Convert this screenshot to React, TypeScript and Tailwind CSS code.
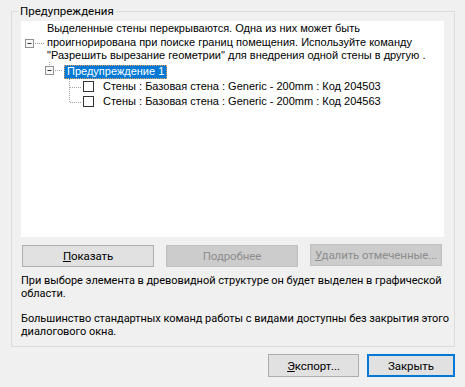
import React from "react";

const ui = { fontFamily: 'Roboto, "Noto Sans", sans-serif' };
const tree = { fontFamily: '"Liberation Sans", Arial, sans-serif' };

function Btn({
  children,
  w,
  disabled,
  focused,
  extra,
}: {
  children: React.ReactNode;
  w: string;
  disabled?: boolean;
  focused?: boolean;
  extra?: string;
}) {
  let cls =
    "flex items-center justify-center whitespace-nowrap text-[11.5px] tracking-[-0.1px] leading-[14px] h-[22px] " +
    w +
    " ";
  if (disabled) cls += "bg-[#cccccc] border border-[#bfbfbf] text-[#8d8d8d] ";
  else if (focused) cls += "bg-[#e1e1e1] border-2 border-[#0078d7] text-black ";
  else cls += "bg-[#e1e1e1] border border-[#adadad] text-black ";
  return <div className={cls + (extra || "")}>{children}</div>;
}

function Check() {
  return <div className="w-[11px] h-[11px] border border-[#333333] bg-white shrink-0" />;
}

export default function App() {
  return (
    <div
      className="w-[465px] h-[387px] bg-[#f0f0f0] overflow-hidden pt-[11px] pl-[11px] text-black"
      style={ui}
    >
      <div className="relative w-[444px] h-[336px] border border-[#dcdcdc] pt-[9px] pl-[9px]">
        <div className="absolute left-[6px] top-[-9px] px-[2px] bg-[#f0f0f0] text-[11.5px] leading-[16px]">
          Предупреждения
        </div>
        <div className="relative w-[423px] h-[216px] bg-white text-[11px]" style={tree}>
          <svg
            className="absolute left-0 top-0 pointer-events-none"
            width="100"
            height="100"
            viewBox="0 0 100 100"
          >
            <g stroke="#a0a0a0" strokeWidth="1" strokeDasharray="1 1" fill="none">
              <line x1="14" y1="22.5" x2="24" y2="22.5" />
              <line x1="28.5" y1="41" x2="28.5" y2="45" />
              <line x1="34" y1="49.5" x2="42" y2="49.5" />
              <line x1="48.5" y1="58" x2="48.5" y2="82" />
              <line x1="49" y1="66.5" x2="61" y2="66.5" />
              <line x1="49" y1="81.5" x2="61" y2="81.5" />
            </g>
            <rect x="4.5" y="18.5" width="8" height="8" fill="#f7f7f7" stroke="#919191" />
            <line x1="6.5" y1="22.5" x2="10.5" y2="22.5" stroke="#333" />
            <rect x="24.5" y="45.5" width="8" height="8" fill="#f7f7f7" stroke="#919191" />
            <line x1="26.5" y1="49.5" x2="30.5" y2="49.5" stroke="#333" />
          </svg>
          <div className="pl-[26px] pt-[1px] leading-[13.5px] whitespace-nowrap">
            Выделенные стены перекрываются. Одна из них может быть
            <br />
            проигнорирована при поиске границ помещения. Используйте команду
            <br />
            "Разрешить вырезание геометрии" для внедрения одной стены в другую .
          </div>
          <div className="mt-[1.5px] h-[15px] flex items-center pl-[43px]">
            <span className="h-[14px] flex items-center px-[2px] bg-[#0078d7] text-white border border-dotted border-[#f0a050] whitespace-nowrap">
              Предупреждение 1
            </span>
          </div>
          <div className="h-[15px] flex items-center pl-[62px] whitespace-nowrap">
            <Check />
            <span className="ml-[9px]">Стены : Базовая стена : Generic - 200mm : Код 204503</span>
          </div>
          <div className="h-[15px] flex items-center pl-[62px] whitespace-nowrap">
            <Check />
            <span className="ml-[9px]">Стены : Базовая стена : Generic - 200mm : Код 204563</span>
          </div>
        </div>
        <div className="mt-[8px] flex gap-[12px] pl-[1px]">
          <Btn w="w-[132px]">
            <span>
              <span className="underline">П</span>оказать
            </span>
          </Btn>
          <Btn w="w-[132px]" disabled>
            <span>
              По<span className="underline">д</span>робнее
            </span>
          </Btn>
          <Btn w="w-[132px]" disabled extra="-mt-[1px]">
            <span>
              <span className="underline">У</span>далить отмеченные...
            </span>
          </Btn>
        </div>
        <div className="mt-[7px] text-[11px] tracking-[-0.04px] leading-[13px] whitespace-nowrap">
          При выборе элемента в древовидной структуре он будет выделен в графической
          <br />
          области.
        </div>
        <div className="mt-[12px] text-[11px] tracking-[-0.04px] leading-[13px] whitespace-nowrap">
          Большинство стандартных команд работы с видами доступны без закрытия этого
          <br />
          диалогового окна.
        </div>
      </div>
      <div className="w-[444px] mt-[7px] flex justify-end gap-[8px]">
        <Btn w="w-[91px] h-[23px]">
          <span>
            <span className="underline">Э</span>кспорт...
          </span>
        </Btn>
        <Btn w="w-[88px] h-[23px]" focused>
          Закрыть
        </Btn>
      </div>
    </div>
  );
}
